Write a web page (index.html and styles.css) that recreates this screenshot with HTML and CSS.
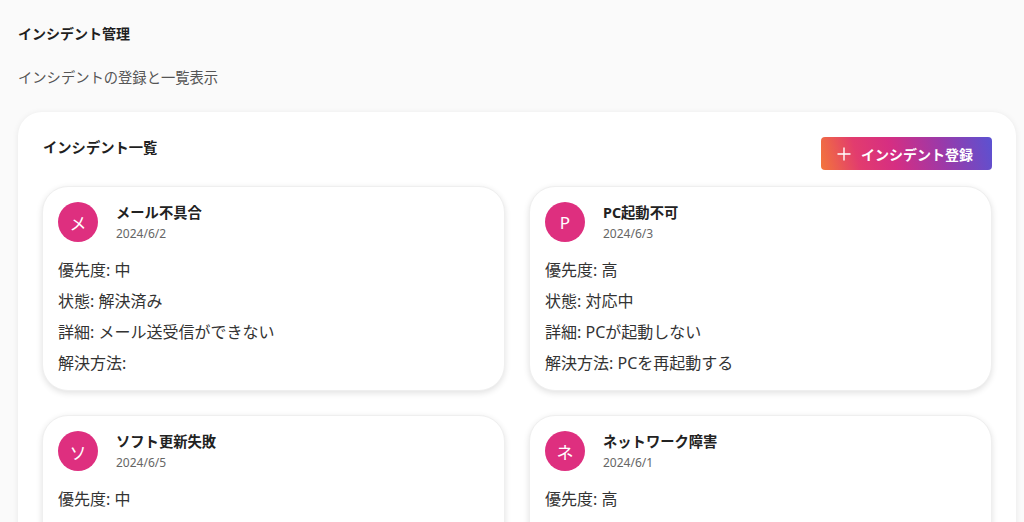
FILE: index.html
```html
<!DOCTYPE html>
<html lang="ja">
<head>
    <meta charset="UTF-8">
    <meta name="viewport" content="width=device-width, initial-scale=1.0">
    <title>インシデント管理</title>
    <link rel="stylesheet" href="styles.css">
</head>
<body>
    <div class="page">
        <h1 class="page-title">インシデント管理</h1>
        <p class="page-sub">インシデントの登録と一覧表示</p>

        <div class="panel">
            <div class="panel-head">
                <h2 class="panel-title">インシデント一覧</h2>
                <button class="add-btn">
                    <svg width="16" height="16" viewBox="0 0 16 16" fill="none" stroke="#fff" stroke-width="1.4">
                        <path d="M8 1.5v13M1.5 8h13"/>
                    </svg>
                    インシデント登録
                </button>
            </div>

            <div class="card-grid">
                <!-- card 1 -->
                <div class="card">
                    <div class="card-head">
                        <div class="avatar">メ</div>
                        <div>
                            <div class="card-title">メール不具合</div>
                            <div class="card-date">2024/6/2</div>
                        </div>
                    </div>
                    <div class="card-body">
                        <p>優先度: 中</p>
                        <p>状態: 解決済み</p>
                        <p>詳細: メール送受信ができない</p>
                        <p>解決方法: </p>
                    </div>
                </div>

                <!-- card 2 -->
                <div class="card">
                    <div class="card-head">
                        <div class="avatar">P</div>
                        <div>
                            <div class="card-title">PC起動不可</div>
                            <div class="card-date">2024/6/3</div>
                        </div>
                    </div>
                    <div class="card-body">
                        <p>優先度: 高</p>
                        <p>状態: 対応中</p>
                        <p>詳細: PCが起動しない</p>
                        <p>解決方法: PCを再起動する</p>
                    </div>
                </div>

                <!-- card 3 -->
                <div class="card">
                    <div class="card-head">
                        <div class="avatar">ソ</div>
                        <div>
                            <div class="card-title">ソフト更新失敗</div>
                            <div class="card-date">2024/6/5</div>
                        </div>
                    </div>
                    <div class="card-body">
                        <p>優先度: 中</p>
                        <p>状態: 未対応</p>
                        <p>詳細: ソフトの更新に失敗する</p>
                        <p>解決方法: </p>
                    </div>
                </div>

                <!-- card 4 -->
                <div class="card">
                    <div class="card-head">
                        <div class="avatar">ネ</div>
                        <div>
                            <div class="card-title">ネットワーク障害</div>
                            <div class="card-date">2024/6/1</div>
                        </div>
                    </div>
                    <div class="card-body">
                        <p>優先度: 高</p>
                        <p>状態: 対応中</p>
                        <p>詳細: ネットワークに接続できない</p>
                        <p>解決方法: </p>
                    </div>
                </div>
            </div>
        </div>
    </div>
</body>
</html>
```

FILE: styles.css
```css
body {
    margin: 0;
    background-color: #fafafa;
    font-family: "Noto Sans", "Noto Sans CJK JP", sans-serif;
    color: #222;
}
.page {
    padding: 24px 8px 24px 18px;
}
.page-title {
    margin: 0;
    font-size: 14px;
    font-weight: 700;
    line-height: 20px;
    color: #1f1f1f;
}
.page-sub {
    margin: 24px 0 0;
    font-size: 14.3px;
    line-height: 20px;
    color: #555;
}
.panel {
    margin-top: 24px;
    background-color: #fff;
    border-radius: 24px;
    padding: 24px;
    box-shadow: 0 1px 6px rgba(0, 0, 0, 0.08);
}
.panel-head {
    display: flex;
    justify-content: space-between;
    align-items: flex-start;
    margin-bottom: 16px;
}
.panel-title {
    margin: 0 0 0 1px;
    font-size: 14.3px;
    font-weight: 700;
    line-height: 24px;
    color: #1f1f1f;
}
.add-btn {
    display: flex;
    align-items: center;
    gap: 9px;
    height: 33px;
    width: 171px;
    padding: 0 15px;
    margin-top: 1px;
    border: none;
    border-radius: 4px;
    color: #fff;
    font-family: inherit;
    font-size: 14px;
    font-weight: 700;
    background: linear-gradient(75deg, #f3763a 0%, #e23c6e 22%, #d62e82 42%, #9c39a8 70%, #5a52d2 100%);
    cursor: pointer;
}
.card-grid {
    display: grid;
    grid-template-columns: 1fr 1fr;
    gap: 24px;
}
.card {
    background-color: #fff;
    border: 1px solid #efefef;
    border-radius: 26px;
    padding: 15px;
    box-shadow: 0 2px 6px rgba(0, 0, 0, 0.12);
}
.card-head {
    display: flex;
    align-items: center;
    gap: 18px;
    height: 40px;
}
.avatar {
    width: 40px;
    height: 40px;
    border-radius: 50%;
    background-color: #de2f7f;
    color: #fff;
    font-size: 17px;
    display: flex;
    align-items: center;
    justify-content: center;
    flex-shrink: 0;
}
.card-title {
    font-size: 14.3px;
    font-weight: 700;
    line-height: 24px;
    color: #222;
}
.card-date {
    font-size: 12px;
    line-height: 18px;
    color: #666;
}
.card-body {
    padding-top: 16px;
}
.card-body p {
    margin: 0 0 7px;
    font-size: 16px;
    line-height: 24px;
    color: #333;
}
.card-body p:last-child {
    margin-bottom: 0;
}
```
